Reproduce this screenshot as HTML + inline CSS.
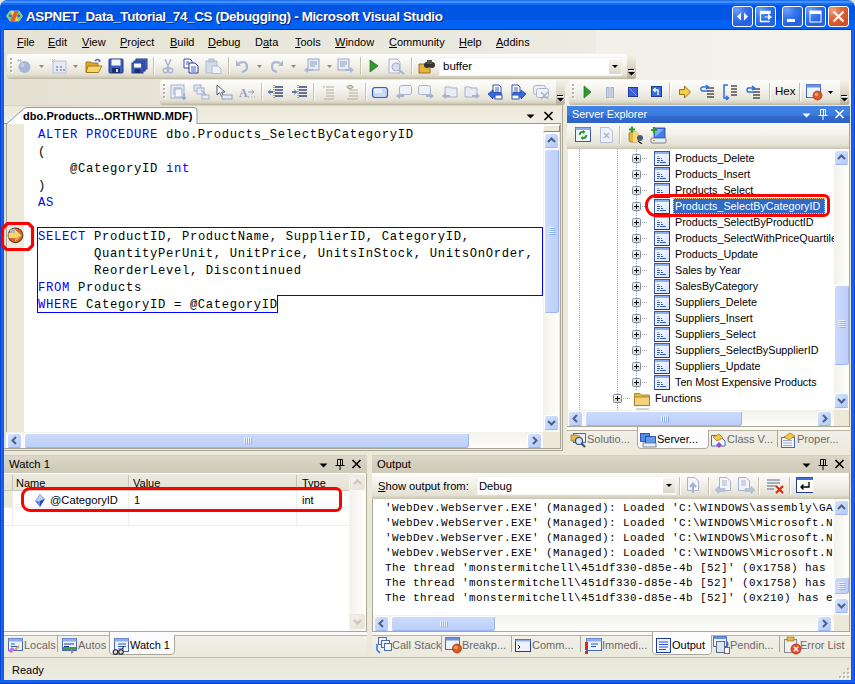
<!DOCTYPE html><html><head><meta charset="utf-8"><style>
*{margin:0;padding:0;box-sizing:border-box}
html,body{width:855px;height:684px;overflow:hidden;background:#ECE9D8}
body{position:relative;font-family:"Liberation Sans",sans-serif;font-size:11px;color:#000}
.a{position:absolute}
.t{position:absolute;white-space:nowrap;line-height:13px}
.k{color:#0000FF}
.u{text-decoration:underline;text-underline-offset:1px}
.mono{font-family:"Liberation Mono",monospace}
.tbar{border-radius:3px;background:linear-gradient(to bottom,#FDFDFB 0%,#F5F4EE 35%,#E6E3D6 80%,#D4D0BE 92%,#B9B49E 100%)}
.grip{position:absolute;width:3px;height:15px;background:repeating-linear-gradient(to bottom,#B5B19E 0 2px,transparent 2px 4px) 0 0/2px 15px no-repeat,repeating-linear-gradient(to bottom,#fff 0 2px,transparent 2px 4px) 1px 1px/2px 15px no-repeat}
.sep{position:absolute;width:2px;height:18px;border-left:1px solid #C5C1AE;border-right:1px solid #fff}
.capbar{position:absolute;height:18px;background:linear-gradient(to bottom,#CFCBBA 0,#DAD7C9 1px,#D4D0C0 50%,#CECAB9 100%)}
.vtrack{position:absolute;background:linear-gradient(to right,#F2F1EA,#FEFEFB)}
.htrack{position:absolute;background:linear-gradient(to bottom,#F2F1EA,#FEFEFB)}
.sb{position:absolute;width:15px;height:15px;border-radius:3px;border:1px solid #fff;border-bottom-color:#9DB6EE;background:linear-gradient(135deg,#D6E2FE 0%,#C4D5FC 50%,#B6CAF8 100%)}
.sbd{position:absolute;width:15px;height:15px;border-radius:2px;border:1px solid #E8E6DA;background:linear-gradient(135deg,#F4F3EE,#E4E1D4)}
.th{position:absolute;border-radius:3px;border:1px solid #fff;border-bottom-color:#9DB6EE;border-right-color:#9DB6EE;background:linear-gradient(to right,#CBDAFD,#BDCFF9)}
.thh{position:absolute;border-radius:3px;border:1px solid #fff;border-bottom-color:#9DB6EE;border-right-color:#9DB6EE;background:linear-gradient(to bottom,#CBDAFD,#BDCFF9)}
.tabtxt{color:#555}
</style></head><body>
<div class="a" style="left:0px;top:0px;width:855px;height:30px;border-radius:7px 7px 0 0;background:linear-gradient(to bottom,#0A4CD8 0px,#3C92FF 1px,#3C92FF 3px,#166CF4 3px,#166CF4 5px,#0055E3 5px,#0055E3 20px,#0061F4 20px,#0061F4 29px,#0033C6 29px)"></div>
<svg class="a" style="left:6px;top:10px" width="17" height="12" viewBox="0 0 17 12"><path d="M0.5 6 L4 1 H13 L16.5 6 L13 11 H4Z" fill="#86C858" stroke="#A8D8E8" stroke-width="0.8"/><path d="M4.5 1 H8.5 L12.5 11 H8.5Z" fill="#F6D060"/><path d="M4.5 11 H8.5 L12.5 1 H8.5Z" fill="#E8582A"/><circle cx="4.3" cy="5.8" r="1.4" fill="#1A66F0"/><circle cx="12.7" cy="5.8" r="1.4" fill="#1A66F0"/></svg>
<div class="t" style="left:26px;top:9px;font-size:13.4px;letter-spacing:-0.33px;font-weight:bold;color:#fff;text-shadow:1px 1px 0 #0A1E7A;line-height:15px">ASPNET_Data_Tutorial_74_CS (Debugging) - Microsoft Visual Studio</div>
<div class="a" style="left:732px;top:6px;width:21px;height:21px;border:1px solid #fff;border-radius:3px;background:radial-gradient(circle at 20% 15%,#6CA0F8 0%,#3A78EE 35%,#2460E4 70%,#2A66EA 100%)"></div>
<svg class="a" style="left:732px;top:6px" width="21" height="21" viewBox="0 0 21 21"><path d="M5 10.5 L9 6.5 L9 14.5Z M16 10.5 L12 6.5 L12 14.5Z" fill="#fff"/></svg>
<div class="a" style="left:755px;top:6px;width:21px;height:21px;border:1px solid #fff;border-radius:3px;background:radial-gradient(circle at 20% 15%,#6CA0F8 0%,#3A78EE 35%,#2460E4 70%,#2A66EA 100%)"></div>
<svg class="a" style="left:755px;top:6px" width="21" height="21" viewBox="0 0 21 21"><path d="M5.5 5 V15.5 H15 M5 5.5 H15 V8" stroke="#fff" stroke-width="1.3" fill="none"/><rect x="5" y="5" width="10" height="3" fill="#fff"/><path d="M9.5 11 H15 M13.5 9 L16 11 L13.5 13Z" stroke="#fff" stroke-width="1.2" fill="#fff"/></svg>
<div class="a" style="left:782px;top:6px;width:21px;height:21px;border:1px solid #fff;border-radius:3px;background:radial-gradient(circle at 20% 15%,#6CA0F8 0%,#3A78EE 35%,#2460E4 70%,#2A66EA 100%)"></div>
<svg class="a" style="left:782px;top:6px" width="21" height="21" viewBox="0 0 21 21"><rect x="5" y="13" width="8" height="3" fill="#fff"/></svg>
<div class="a" style="left:805px;top:6px;width:21px;height:21px;border:1px solid #fff;border-radius:3px;background:radial-gradient(circle at 20% 15%,#6CA0F8 0%,#3A78EE 35%,#2460E4 70%,#2A66EA 100%)"></div>
<svg class="a" style="left:805px;top:6px" width="21" height="21" viewBox="0 0 21 21"><rect x="5" y="5" width="11" height="11" fill="none" stroke="#fff" stroke-width="1"/><rect x="5" y="5" width="11" height="3" fill="#fff"/></svg>
<div class="a" style="left:828px;top:6px;width:21px;height:21px;border:1px solid #fff;border-radius:3px;background:radial-gradient(circle at 20% 15%,#F2A078 0%,#E2643A 40%,#D24E22 80%,#DA5A30 100%)"></div>
<svg class="a" style="left:828px;top:6px" width="21" height="21" viewBox="0 0 21 21"><path d="M5.5 5.5 L15.5 15.5 M15.5 5.5 L5.5 15.5" stroke="#fff" stroke-width="2.2"/></svg>
<div class="a" style="left:0px;top:29px;width:4px;height:655px;background:linear-gradient(to right,#0831C0,#166CF4 40%,#0855E6)"></div>
<div class="a" style="left:851px;top:29px;width:4px;height:655px;background:linear-gradient(to right,#0855E6,#166CF4 60%,#0831C0)"></div>
<div class="a" style="left:0px;top:680px;width:855px;height:4px;background:linear-gradient(to bottom,#0855E6,#166CF4 50%,#0831C0)"></div>
<div class="a" style="left:4px;top:30px;width:847px;height:75px;background:linear-gradient(to right,#E4E1D3 0%,#EAE7DC 45%,#F2F0E9 70%,#F3F1EA 100%)"></div>
<div class="a" style="left:4px;top:30px;width:592px;height:23px;background:linear-gradient(to right,#E6E3D5,#EDEBE2)"></div>
<div class="t" style="left:17px;top:36px;"><span class="u">F</span>ile</div>
<div class="t" style="left:48px;top:36px;"><span class="u">E</span>dit</div>
<div class="t" style="left:82px;top:36px;"><span class="u">V</span>iew</div>
<div class="t" style="left:120px;top:36px;"><span class="u">P</span>roject</div>
<div class="t" style="left:170px;top:36px;"><span class="u">B</span>uild</div>
<div class="t" style="left:208px;top:36px;"><span class="u">D</span>ebug</div>
<div class="t" style="left:255px;top:36px;">D<span class="u">a</span>ta</div>
<div class="t" style="left:295px;top:36px;"><span class="u">T</span>ools</div>
<div class="t" style="left:335px;top:36px;"><span class="u">W</span>indow</div>
<div class="t" style="left:389px;top:36px;"><span class="u">C</span>ommunity</div>
<div class="t" style="left:459px;top:36px;"><span class="u">H</span>elp</div>
<div class="t" style="left:496px;top:36px;"><span class="u">A</span>ddins</div>
<div class="a tbar" style="left:7px;top:54px;width:629px;height:25px"></div>
<div class="a tbar" style="left:160px;top:80px;width:405px;height:25px"></div>
<div class="a tbar" style="left:569px;top:80px;width:281px;height:25px"></div>
<div class="grip" style="left:10px;top:58px"></div>
<svg class="a" style="left:16px;top:58px" width="16" height="16" viewBox="0 0 16 16"><circle cx="8.5" cy="9" r="6" fill="#A9B6D6"/><circle cx="6.5" cy="7" r="2" fill="#C8D2EA"/><path d="M2 1 L5 4 M5 1 L2 4 M1 2.5 H6" stroke="#B9C4DE"/></svg>
<svg class="a" style="left:39px;top:65px" width="5" height="3" viewBox="0 0 5 3"><path d="M0 0 H5 L2.5 3Z" fill="#8E8B7C"/></svg>
<svg class="a" style="left:51px;top:58px" width="17" height="16" viewBox="0 0 17 16"><rect x="2" y="3" width="13" height="12" fill="#E5E9F3" stroke="#B7C1D9"/><rect x="5" y="8" width="2" height="2" fill="#97A5C6"/><rect x="9" y="8" width="2" height="2" fill="#97A5C6"/><rect x="5" y="11" width="2" height="2" fill="#97A5C6"/><rect x="9" y="11" width="2" height="2" fill="#97A5C6"/><rect x="12" y="11" width="2" height="2" fill="#97A5C6"/><path d="M1 1 L4 4 M4 1 L1 4" stroke="#B9C4DE"/></svg>
<svg class="a" style="left:73px;top:65px" width="5" height="3" viewBox="0 0 5 3"><path d="M0 0 H5 L2.5 3Z" fill="#8E8B7C"/></svg>
<svg class="a" style="left:85px;top:58px" width="18" height="16" viewBox="0 0 18 16"><path d="M1 4 H6 L7 5 H13 V14 H1Z" fill="#E0A828" stroke="#8A6510" stroke-width="0.8"/><path d="M3 8 H17 L13.5 14.5 H1Z" fill="#F7D66A" stroke="#8A6510" stroke-width="0.8"/><path d="M10 3 Q13 0 15 3" stroke="#3C6BD0" stroke-width="1.4" fill="none"/><path d="M14 1.5 L16 3.5 L13.5 4Z" fill="#3C6BD0"/></svg>
<svg class="a" style="left:108px;top:58px" width="16" height="16" viewBox="0 0 16 16"><rect x="1" y="1" width="14" height="14" rx="1" fill="#3F5FBF" stroke="#1F3A8A"/><rect x="3.5" y="1.5" width="9" height="6" fill="#F5F7FC"/><rect x="4" y="10" width="8" height="5" fill="#1C2C6C"/><rect x="8" y="11" width="2" height="3" fill="#DDE"/></svg>
<svg class="a" style="left:131px;top:58px" width="17" height="16" viewBox="0 0 17 16"><rect x="5" y="1" width="11" height="10" fill="#5A78D0" stroke="#1F3A8A"/><rect x="3" y="3" width="11" height="10" fill="#4A68C6" stroke="#1F3A8A"/><rect x="1" y="5" width="11" height="10" fill="#3F5FBF" stroke="#1F3A8A"/><rect x="3" y="5.5" width="7" height="4" fill="#F5F7FC"/><rect x="3.5" y="11" width="6" height="4" fill="#1C2C6C"/></svg>
<div class="sep" style="left:153px;top:57px"></div>
<svg class="a" style="left:160px;top:58px" width="16" height="16" viewBox="0 0 16 16"><path d="M5 1 L9 10 M11 1 L7 10" stroke="#A9B6D6" stroke-width="1.5"/><circle cx="5.5" cy="12.5" r="2.3" fill="none" stroke="#A9B6D6" stroke-width="1.5"/><circle cx="10.5" cy="12.5" r="2.3" fill="none" stroke="#A9B6D6" stroke-width="1.5"/></svg>
<svg class="a" style="left:183px;top:58px" width="16" height="16" viewBox="0 0 16 16"><path d="M1 1 H7 L9 3 V10 H1Z" fill="#fff" stroke="#3050B8"/><path d="M6 5 H12 L15 8 V15 H6Z" fill="#fff" stroke="#1F3A9A"/><path d="M8 9 H13 M8 11 H13 M8 13 H13 M3 4 H6 M3 6 H6" stroke="#3C5FC8"/></svg>
<svg class="a" style="left:205px;top:58px" width="17" height="16" viewBox="0 0 17 16"><rect x="1" y="3" width="11" height="12" fill="#D4DBEA" stroke="#AFBAD2"/><rect x="4" y="1" width="5" height="3" fill="#C7CFE0" stroke="#AFBAD2"/><path d="M7 8 H13 L16 11 V15.5 H7Z" fill="#EEF1F7" stroke="#AFBAD2"/></svg>
<div class="sep" style="left:228px;top:57px"></div>
<svg class="a" style="left:235px;top:58px" width="16" height="16" viewBox="0 0 16 16"><path d="M4 5 Q12 2 12 9 Q12 13 7 14" stroke="#A9B6D6" stroke-width="2.2" fill="none"/><path d="M1 2 L6 8 L1 8Z" fill="#A9B6D6"/></svg>
<svg class="a" style="left:257px;top:65px" width="5" height="3" viewBox="0 0 5 3"><path d="M0 0 H5 L2.5 3Z" fill="#8E8B7C"/></svg>
<svg class="a" style="left:268px;top:58px" width="16" height="16" viewBox="0 0 16 16"><path d="M12 5 Q4 2 4 9 Q4 13 9 14" stroke="#A9B6D6" stroke-width="2.2" fill="none"/><path d="M15 2 L10 8 L15 8Z" fill="#A9B6D6"/></svg>
<svg class="a" style="left:291px;top:65px" width="5" height="3" viewBox="0 0 5 3"><path d="M0 0 H5 L2.5 3Z" fill="#8E8B7C"/></svg>
<svg class="a" style="left:303px;top:58px" width="18" height="16" viewBox="0 0 18 16"><rect x="5" y="1" width="11" height="11" fill="#E6EBF6" stroke="#9DAACB"/><path d="M7 4 H14 M7 6 H14 M7 8 H12" stroke="#8C9DC8"/><path d="M1 12 L5 9 V11 H10 V13 H5 V15Z" fill="#A9B6D6"/></svg>
<svg class="a" style="left:327px;top:65px" width="5" height="3" viewBox="0 0 5 3"><path d="M0 0 H5 L2.5 3Z" fill="#8E8B7C"/></svg>
<svg class="a" style="left:337px;top:58px" width="18" height="16" viewBox="0 0 18 16"><rect x="1" y="1" width="11" height="11" fill="#E6EBF6" stroke="#9DAACB"/><path d="M3 4 H10 M3 6 H10 M3 8 H8" stroke="#8C9DC8"/><path d="M17 12 L13 9 V11 H8 V13 H13 V15Z" fill="#A9B6D6"/></svg>
<div class="sep" style="left:360px;top:57px"></div>
<svg class="a" style="left:368px;top:58px" width="12" height="16" viewBox="0 0 12 16"><path d="M2 2 L10 8 L2 14Z" fill="#2E9A2E" stroke="#1C6A1C" stroke-width="0.7"/></svg>
<svg class="a" style="left:388px;top:58px" width="18" height="17" viewBox="0 0 18 17"><path d="M1 1 H9 L12 4 V15 H1Z" fill="#F2F4F9" stroke="#A6B1CD"/><circle cx="8" cy="9" r="4" fill="#D9DEEB" stroke="#A6B1CD"/><path d="M11 12 L16 16" stroke="#A6B1CD" stroke-width="2"/></svg>
<div class="sep" style="left:411px;top:57px"></div>
<svg class="a" style="left:418px;top:58px" width="17" height="16" viewBox="0 0 17 16"><path d="M1 6 H6 L7 7 H12 V15 H1Z" fill="#E6B43A" stroke="#7A5A10" stroke-width="0.8"/><circle cx="9" cy="7" r="3" fill="#333"/><circle cx="14" cy="7" r="3" fill="#333"/><rect x="9" y="2" width="5" height="4" fill="#555"/></svg>
<div class="a" style="left:439px;top:57px;width:183px;height:19px;background:#fff;border:1px solid #F4F2EA"></div>
<div class="t" style="left:443px;top:60px;font-size:11.5px">buffer</div>
<div class="a" style="left:609px;top:59px;width:12px;height:15px;background:linear-gradient(to bottom,#F6F5F0,#DCD8C8)"></div>
<svg class="a" style="left:612px;top:65px" width="6" height="3" viewBox="0 0 6 3"><path d="M0 0 H6 L3 3Z" fill="#000"/></svg>
<div class="a" style="left:627px;top:54px;width:9px;height:25px;border-radius:0 3px 3px 0;background:linear-gradient(to bottom,#F4F2EA 0%,#DEDACB 45%,#C6C1AC 80%,#B3AE96 100%)"></div>
<svg class="a" style="left:628px;top:68px" width="8" height="9" viewBox="0 0 8 9"><rect x="1" y="2" width="6" height="1" fill="#fff"/><rect x="0" y="1" width="6" height="1" fill="#000"/><path d="M0 4 H7 L3.5 7.5Z" fill="#000"/><path d="M4 8 L7.5 4.5" stroke="#fff"/></svg>
<div class="grip" style="left:163px;top:84px"></div>
<svg class="a" style="left:170px;top:84px" width="17" height="16" viewBox="0 0 17 16"><rect x="1" y="1" width="13" height="13" fill="#E8ECF6" stroke="#A6B1CD"/><path d="M3 4 H12 M3 6 H8 M3 8 H8 M3 10 H8" stroke="#A6B1CD"/><rect x="5" y="5" width="7" height="8" fill="#F4F6FB" stroke="#A6B1CD"/><path d="M14 9 V15 M12 13 L14 15.5 L16 13" stroke="#8FA0C8" stroke-width="1.2" fill="none"/></svg>
<svg class="a" style="left:193px;top:84px" width="17" height="16" viewBox="0 0 17 16"><rect x="1" y="1" width="7" height="6" fill="#E1E6F2" stroke="#A6B1CD"/><rect x="4" y="4" width="7" height="6" fill="#E8ECF6" stroke="#A6B1CD"/><path d="M8 6 L14 12 L11 12 L13 15" stroke="#A6B1CD" fill="none" stroke-width="1.2"/><rect x="9" y="11" width="7" height="4" fill="#E8ECF6" stroke="#A6B1CD"/></svg>
<svg class="a" style="left:216px;top:84px" width="17" height="16" viewBox="0 0 17 16"><path d="M1 1 V11 L3.5 8.5 L6 13 L7.5 12 L5.5 8 H9Z" fill="#fff" stroke="#3A4A6A" stroke-width="0.9"/><rect x="6" y="11" width="10" height="4" fill="#E8ECF6" stroke="#8C9DC8"/></svg>
<svg class="a" style="left:239px;top:84px" width="16" height="16" viewBox="0 0 16 16"><text x="0" y="13" font-family="Liberation Serif" font-size="12" fill="#8C9DC8" font-weight="bold">A</text><path d="M9 8 H15 M12.5 6 L15 8 L12.5 10" stroke="#8C9DC8" fill="none"/><path d="M9 13 H10 M12 13 H13 M15 13 H16" stroke="#8C9DC8"/></svg>
<div class="sep" style="left:261px;top:83px"></div>
<svg class="a" style="left:267px;top:84px" width="17" height="16" viewBox="0 0 17 16"><path d="M7 1 V15" stroke="#4A5A88" stroke-dasharray="1 1"/><path d="M8 3 H16 M8 6 H16 M8 9 H16 M8 12 H16 M1 8 H6" stroke="#3A4A78" stroke-width="1.5"/><path d="M1 8 L4 5.5 M1 8 L4 10.5" stroke="#6C8AD8"/></svg>
<svg class="a" style="left:291px;top:84px" width="17" height="16" viewBox="0 0 17 16"><path d="M7 1 V15" stroke="#4A5A88" stroke-dasharray="1 1"/><path d="M8 3 H16 M8 6 H16 M8 9 H16 M8 12 H16 M1 8 H6" stroke="#3A4A78" stroke-width="1.5"/><path d="M6 8 L3 5.5 M6 8 L3 10.5" stroke="#6C8AD8"/></svg>
<div class="sep" style="left:313px;top:83px"></div>
<svg class="a" style="left:321px;top:84px" width="15" height="16" viewBox="0 0 15 16"><path d="M2 3 H4 M5 3 H13 M5 6 H13 M5 9 H13 M5 12 H13 M3 15 H13" stroke="#B2AE9C" stroke-width="1.2"/></svg>
<svg class="a" style="left:344px;top:84px" width="15" height="16" viewBox="0 0 15 16"><path d="M3 3 Q6 0 9 3 Q6 6 3 3" stroke="#A8A490" fill="none" stroke-width="1.2"/><path d="M5 6 H14 M5 9 H14 M5 12 H14 M3 15 H14" stroke="#B2AE9C" stroke-width="1.2"/></svg>
<div class="sep" style="left:365px;top:83px"></div>
<svg class="a" style="left:371px;top:84px" width="18" height="16" viewBox="0 0 18 16"><rect x="1.5" y="3.5" width="15" height="10" rx="2.5" fill="#C8D8FA" stroke="#3B5BC8" stroke-width="1.2"/><rect x="3" y="5" width="8" height="4" fill="#E8F0FE"/></svg>
<svg class="a" style="left:395px;top:84px" width="17" height="16" viewBox="0 0 17 16"><rect x="4.5" y="1.5" width="12" height="9" rx="2" fill="#EEF1F8" stroke="#A6B1CD"/><path d="M1 12 L5 9 V11 H9 V13 H5 V15Z" fill="#A6B1CD"/></svg>
<svg class="a" style="left:418px;top:84px" width="17" height="16" viewBox="0 0 17 16"><rect x="0.5" y="1.5" width="12" height="9" rx="2" fill="#EEF1F8" stroke="#A6B1CD"/><path d="M16 12 L12 9 V11 H8 V13 H12 V15Z" fill="#A6B1CD"/></svg>
<svg class="a" style="left:441px;top:84px" width="17" height="16" viewBox="0 0 17 16"><path d="M4 3 H9 L10 4 H16 V13 H4Z" fill="#E8EBF2" stroke="#A6B1CD"/><path d="M1 12 L5 9 V11 H9 V13 H5 V15Z" fill="#A6B1CD"/></svg>
<svg class="a" style="left:464px;top:84px" width="17" height="16" viewBox="0 0 17 16"><path d="M1 3 H6 L7 4 H13 V13 H1Z" fill="#E8EBF2" stroke="#A6B1CD"/><path d="M16 12 L12 9 V11 H8 V13 H12 V15Z" fill="#A6B1CD"/></svg>
<svg class="a" style="left:487px;top:84px" width="17" height="16" viewBox="0 0 17 16"><path d="M6 1 H12 L14 3 V11 H6Z" fill="#fff" stroke="#3050B8"/><path d="M8 4 H12 M8 6 H12 M8 8 H12" stroke="#3C5FC8"/><path d="M1 10 L6 6 V8.5 H14 V13 H6 V15Z" fill="#2F6FE0" stroke="#1F3A9A" stroke-width="0.7"/><rect x="8" y="11" width="7" height="4" fill="#fff" stroke="#3050B8"/></svg>
<svg class="a" style="left:510px;top:84px" width="17" height="16" viewBox="0 0 17 16"><path d="M2 1 H8 L10 3 V11 H2Z" fill="#fff" stroke="#3050B8"/><path d="M4 4 H8 M4 6 H8 M4 8 H8" stroke="#3C5FC8"/><path d="M16 10 L11 6 V8.5 H3 V13 H11 V15Z" fill="#2F6FE0" stroke="#1F3A9A" stroke-width="0.7"/><rect x="2" y="11" width="7" height="4" fill="#fff" stroke="#3050B8"/></svg>
<svg class="a" style="left:533px;top:84px" width="17" height="16" viewBox="0 0 17 16"><rect x="0.5" y="1.5" width="12" height="9" rx="2" fill="#EEF1F8" stroke="#A6B1CD"/><rect x="3.5" y="4.5" width="12" height="9" rx="2" fill="#EEF1F8" stroke="#A6B1CD"/><path d="M8 8 L15 15 M15 8 L8 15" stroke="#A6B1CD" stroke-width="1.5"/></svg>
<div class="a" style="left:556px;top:80px;width:9px;height:25px;border-radius:0 3px 3px 0;background:linear-gradient(to bottom,#F4F2EA 0%,#DEDACB 45%,#C6C1AC 80%,#B3AE96 100%)"></div>
<svg class="a" style="left:557px;top:94px" width="8" height="9" viewBox="0 0 8 9"><rect x="1" y="2" width="6" height="1" fill="#fff"/><rect x="0" y="1" width="6" height="1" fill="#000"/><path d="M0 4 H7 L3.5 7.5Z" fill="#000"/><path d="M4 8 L7.5 4.5" stroke="#fff"/></svg>
<div class="grip" style="left:572px;top:84px"></div>
<svg class="a" style="left:582px;top:84px" width="10" height="16" viewBox="0 0 10 16"><path d="M2 2 L9 8 L2 14Z" fill="#2E9A2E" stroke="#1C6A1C" stroke-width="0.7"/></svg>
<svg class="a" style="left:605px;top:84px" width="10" height="16" viewBox="0 0 10 16"><rect x="1.5" y="3.5" width="2.5" height="10" fill="#C9D3EC" stroke="#A6B1CD"/><rect x="6" y="3.5" width="2.5" height="10" fill="#C9D3EC" stroke="#A6B1CD"/></svg>
<svg class="a" style="left:627px;top:84px" width="12" height="16" viewBox="0 0 12 16"><rect x="1.5" y="3.5" width="9" height="9" fill="#3F64D8" stroke="#1F3A9A"/><path d="M2 4 L10 12" stroke="#7E9BEA"/></svg>
<svg class="a" style="left:650px;top:84px" width="13" height="16" viewBox="0 0 13 16"><rect x="1.5" y="2.5" width="10" height="10" fill="#2F6FE0" stroke="#1F3A9A"/><path d="M8 11 V6 H4 M5.5 4 L3.5 6 L5.5 8" stroke="#fff" stroke-width="1.3" fill="none"/></svg>
<div class="sep" style="left:669px;top:83px"></div>
<svg class="a" style="left:678px;top:84px" width="14" height="16" viewBox="0 0 14 16"><path d="M1.5 5.5 H6.5 V2 L12.5 8 L6.5 14 V10.5 H1.5Z" fill="#F6CE48" stroke="#8A6510" stroke-width="0.9"/></svg>
<svg class="a" style="left:699px;top:84px" width="17" height="16" viewBox="0 0 17 16"><path d="M8 4 H15 M8 7 H15 M8 10 H15 M8 13 H15" stroke="#000" stroke-width="1.2"/><path d="M10 7 H3 Q0.5 5 3 3 H9 M7 1 L9.5 3 L7 5" stroke="#2F6FE0" stroke-width="1.5" fill="none"/></svg>
<svg class="a" style="left:722px;top:84px" width="17" height="17" viewBox="0 0 17 17"><path d="M9 2 H15 M9 5 H15 M9 8 H15 M9 11 H15" stroke="#000" stroke-width="1.2"/><path d="M6 1 H2 V14 H6 M4 12 L6.5 14 L4 16" stroke="#2F6FE0" stroke-width="1.5" fill="none"/></svg>
<svg class="a" style="left:745px;top:84px" width="17" height="17" viewBox="0 0 17 17"><path d="M8 5 H15 M8 8 H15 M8 11 H15 M8 14 H15" stroke="#000" stroke-width="1.2"/><path d="M8 8 H3 Q1 6 3 4 H9 M7 2 L9.5 4 L7 6" stroke="#2F6FE0" stroke-width="1.5" fill="none"/></svg>
<div class="sep" style="left:769px;top:83px"></div>
<div class="t" style="left:775px;top:85px;font-size:11.5px">Hex</div>
<div class="sep" style="left:799px;top:83px"></div>
<svg class="a" style="left:806px;top:84px" width="18" height="17" viewBox="0 0 18 17"><rect x="0.5" y="0.5" width="14" height="13" fill="#F0F4FC" stroke="#4A6AB8"/><rect x="0.5" y="0.5" width="14" height="3" fill="#6A90E0"/><circle cx="11.5" cy="11.5" r="4.5" fill="#D85A28" stroke="#A03A10" stroke-width="0.8"/><circle cx="10.5" cy="10.5" r="1.8" fill="#F0A070"/></svg>
<svg class="a" style="left:828px;top:91px" width="5" height="3" viewBox="0 0 5 3"><path d="M0 0 H5 L2.5 3Z" fill="#000"/></svg>
<div class="a" style="left:840px;top:80px;width:9px;height:25px;border-radius:0 3px 3px 0;background:linear-gradient(to bottom,#F4F2EA 0%,#DEDACB 45%,#C6C1AC 80%,#B3AE96 100%)"></div>
<svg class="a" style="left:841px;top:94px" width="8" height="9" viewBox="0 0 8 9"><rect x="1" y="2" width="6" height="1" fill="#fff"/><rect x="0" y="1" width="6" height="1" fill="#000"/><path d="M0 4 H7 L3.5 7.5Z" fill="#000"/><path d="M4 8 L7.5 4.5" stroke="#fff"/></svg>
<div class="a" style="left:4px;top:105px;width:557px;height:345px;background:#ECE9D8"></div>
<div class="a" style="left:4px;top:105px;width:557px;height:1px;background:#D8D4C4"></div>
<div class="a" style="left:4px;top:106px;width:557px;height:18px;background:linear-gradient(to bottom,#ECE9D8,#F1EFE6)"></div>
<div class="a" style="left:4px;top:123px;width:557px;height:1px;background:#7F9DB9"></div>
<svg class="a" style="left:4px;top:106px" width="200" height="19" viewBox="0 0 200 19"><path d="M2 18.5 L20 2.5 Q21.5 1.5 23 1.5 L190 1.5 Q193 1.5 193 4.5 L193 18.5" fill="#fff" stroke="#7F9DB9" stroke-width="1"/></svg>
<div class="t" style="left:23px;top:110px;font-weight:bold;font-size:11px;letter-spacing:0.05px">dbo.Products...ORTHWND.MDF)</div>
<svg class="a" style="left:526px;top:114px" width="10" height="6" viewBox="0 0 10 6"><path d="M0.5 0.5 H8.5 L4.5 4.5Z" fill="#000"/></svg>
<svg class="a" style="left:543px;top:111px" width="11" height="10" viewBox="0 0 11 10"><path d="M1.5 1 L9.5 9 M9.5 1 L1.5 9" stroke="#000" stroke-width="1.6"/></svg>
<div class="a" style="left:4px;top:124px;width:2px;height:326px;background:#E4E1D4"></div>
<div class="a" style="left:6px;top:124px;width:1px;height:308px;background:#ACA899"></div>
<div class="a" style="left:7px;top:124px;width:17px;height:308px;background:#ECE9D8"></div>
<div class="a" style="left:24px;top:124px;width:519px;height:308px;background:#fff"></div>
<svg class="a" style="left:7px;top:227px" width="17" height="17" viewBox="0 0 17 17"><circle cx="8.5" cy="8.3" r="7.3" fill="#D8643A" stroke="#6A3A20" stroke-width="1.1"/><path d="M3 3 Q5 1.5 8 1.5 V6 H3Z" fill="#B8B8B0"/><path d="M1.5 6 H8 V2.5 L14.5 8.5 L8 14.5 V11 H1.5Z" fill="#F6D868"/><path d="M8 11 V14.5 L14.5 8.5Z" fill="#E8A840"/></svg>
<svg class="a" style="left:0px;top:221px" width="36" height="31" viewBox="0 0 36 31"><path d="M7.5 2.5 H28.5 L32.5 6.5 V24.5 L28.5 28.5 H6.5 L2.5 24.5 V7.5Z" fill="none" stroke="#F00" stroke-width="3.2" stroke-linejoin="round"/></svg>
<div class="a mono" style="left:38px;top:127px;font-size:12.2px;letter-spacing:0.68px;line-height:17px;white-space:pre;color:#000"><div><span class="k">ALTER PROCEDURE</span> dbo.Products_SelectByCategoryID</div><div>(</div><div>    @CategoryID <span class="k">int</span></div><div>)</div><div><span class="k">AS</span></div><div> </div><div><span class="k">SELECT</span> ProductID, ProductName, SupplierID, CategoryID,</div><div>       QuantityPerUnit, UnitPrice, UnitsInStock, UnitsOnOrder,</div><div>       ReorderLevel, Discontinued</div><div><span class="k">FROM</span> Products</div><div><span class="k">WHERE</span> CategoryID = @CategoryID</div></div>
<div class="a" style="left:37px;top:227px;width:506px;height:1px;background:#00F"></div>
<div class="a" style="left:37px;top:227px;width:1px;height:86px;background:#00F"></div>
<div class="a" style="left:542px;top:227px;width:1px;height:69px;background:#00F"></div>
<div class="a" style="left:277px;top:295px;width:266px;height:1px;background:#00F"></div>
<div class="a" style="left:277px;top:295px;width:1px;height:18px;background:#00F"></div>
<div class="a" style="left:37px;top:312px;width:241px;height:1px;background:#00F"></div>
<div class="vtrack" style="left:543px;top:124px;width:16px;height:308px"></div>
<div class="a" style="left:543px;top:125px;width:17px;height:7px;border:1px solid;border-color:#fff #8F8B78 #8F8B78 #fff;background:#ECE9D8"></div>
<div class="sb" style="left:544px;top:133px"></div>
<svg class="a" style="left:544px;top:133px" width="15" height="15" viewBox="0 0 15 15"><path d="M4 9 L7.5 5.5 L11 9" stroke="#4D6185" stroke-width="2" fill="none"/></svg>
<div class="th" style="left:544px;top:149px;width:15px;height:164px"></div>
<svg class="a" style="left:544px;top:149px" width="15" height="164" viewBox="0 0 15 164"><path d="M4.5 78.5 H10.5 M4.5 80.5 H10.5 M4.5 82.5 H10.5 M4.5 84.5 H10.5" stroke="#EEF3FE" stroke-width="1"/><path d="M5.5 79.5 H11.5 M5.5 81.5 H11.5 M5.5 83.5 H11.5 M5.5 85.5 H11.5" stroke="#8CB0F8" stroke-width="1"/></svg>
<div class="sb" style="left:544px;top:415px"></div>
<svg class="a" style="left:544px;top:415px" width="15" height="15" viewBox="0 0 15 15"><path d="M4 6 L7.5 9.5 L11 6" stroke="#4D6185" stroke-width="2" fill="none"/></svg>
<div class="htrack" style="left:6px;top:432px;width:537px;height:16px"></div>
<div class="sb" style="left:7px;top:433px"></div>
<svg class="a" style="left:7px;top:433px" width="15" height="15" viewBox="0 0 15 15"><path d="M9 4 L5.5 7.5 L9 11" stroke="#4D6185" stroke-width="2" fill="none"/></svg>
<div class="thh" style="left:24px;top:433px;width:445px;height:15px"></div>
<svg class="a" style="left:240px;top:433px" width="15" height="15" viewBox="0 0 15 15"><path d="M4.5 4.5 V10.5 M6.5 4.5 V10.5 M8.5 4.5 V10.5 M10.5 4.5 V10.5" stroke="#EEF3FE"/><path d="M5.5 5.5 V11.5 M7.5 5.5 V11.5 M9.5 5.5 V11.5 M11.5 5.5 V11.5" stroke="#8CB0F8"/></svg>
<div class="sb" style="left:527px;top:433px"></div>
<svg class="a" style="left:527px;top:433px" width="15" height="15" viewBox="0 0 15 15"><path d="M6 4 L9.5 7.5 L6 11" stroke="#4D6185" stroke-width="2" fill="none"/></svg>
<div class="a" style="left:543px;top:432px;width:17px;height:16px;background:#ECE9D8"></div>
<div class="a" style="left:560px;top:124px;width:1px;height:325px;background:#ACA899"></div>
<div class="a" style="left:4px;top:448px;width:557px;height:1px;background:#ACA899"></div>
<div class="a" style="left:562px;top:105px;width:1px;height:346px;background:#ACA899"></div>
<div class="a" style="left:4px;top:450px;width:559px;height:1px;background:#ACA899"></div>
<div class="a" style="left:563px;top:105px;width:4px;height:346px;background:#ECE9D8"></div>
<div class="a" style="left:567px;top:106px;width:283px;height:345px;background:#ECE9D8"></div>
<div class="a" style="left:567px;top:106px;width:283px;height:17px;background:linear-gradient(to bottom,#4384E6 0%,#3A7BE0 55%,#3269CC 62%,#2E63C6 100%)"></div>
<div class="t" style="left:572px;top:108px;color:#fff;font-size:10.8px">Server Explorer</div>
<svg class="a" style="left:802px;top:113px" width="10" height="6" viewBox="0 0 10 6"><path d="M0.5 0.5 H8.5 L4.5 4.5Z" fill="#fff"/></svg>
<svg class="a" style="left:818px;top:109px" width="10" height="11" viewBox="0 0 10 11"><path d="M2.5 0.5 H7.5 V6.5 H2.5Z M5.5 1 V6 M0.5 6.5 H9.5 M5 7 V11" stroke="#fff" stroke-width="1" fill="none"/></svg>
<svg class="a" style="left:834px;top:109px" width="11" height="10" viewBox="0 0 11 10"><path d="M1.5 1 L9.5 9 M9.5 1 L1.5 9" stroke="#fff" stroke-width="1.6"/></svg>
<div class="a" style="left:567px;top:123px;width:283px;height:26px;background:linear-gradient(to bottom,#FCFCFA 0%,#F3F1EA 40%,#E4E1D3 85%,#C9C4B0 100%)"></div>
<svg class="a" style="left:575px;top:127px" width="17" height="16" viewBox="0 0 17 16"><rect x="0.5" y="0.5" width="15" height="14" fill="#F4F7FD" stroke="#3A5AA8"/><rect x="0.5" y="0.5" width="15" height="2.5" fill="#8EAEEA"/><path d="M4.5 8 Q5 4.5 9 4.8 M11.5 8 Q11 11.5 7 11.2" stroke="#2E9A2E" stroke-width="1.8" fill="none"/><path d="M8 3 L10.5 5 L8 7Z M8 9 L5.5 11 L8 13Z" fill="#2E9A2E"/></svg>
<svg class="a" style="left:599px;top:127px" width="15" height="16" viewBox="0 0 15 16"><path d="M1.5 0.5 H10 L13.5 4 V15.5 H1.5Z" fill="#EFF1F7" stroke="#B6BFD6"/><path d="M5 6 L10 11 M10 6 L5 11" stroke="#A9B6D6" stroke-width="1.6"/></svg>
<div class="sep" style="left:619px;top:126px"></div>
<svg class="a" style="left:626px;top:126px" width="19" height="18" viewBox="0 0 19 18"><rect x="3" y="6" width="9" height="10" rx="2" fill="#E8B440" stroke="#8A6510" stroke-width="0.7"/><rect x="7" y="6" width="5" height="10" fill="#F6D878"/><path d="M3 3.5 H9 M6 0.5 V6.5" stroke="#2E9A2E" stroke-width="2.2"/><circle cx="14" cy="12" r="3" fill="#4A5A7A"/><path d="M12 15 L16 18" stroke="#223" stroke-width="1.2"/></svg>
<svg class="a" style="left:649px;top:126px" width="18" height="18" viewBox="0 0 18 18"><path d="M5 2 H16 V12 H5Z" fill="#3F7FE8" stroke="#1F3A9A" stroke-width="0.8"/><path d="M6 3 L15 3 L6 11Z" fill="#7FB0F8"/><rect x="2" y="12" width="15" height="5" rx="1" fill="#E8ECF4" stroke="#5A6A8A" stroke-width="0.8"/><rect x="4" y="14" width="2" height="1" fill="#D89020"/><path d="M2 4 H8 M5 1 V7" stroke="#2E9A2E" stroke-width="2.2"/></svg>
<div class="a" style="left:568px;top:149px;width:266px;height:262px;background:#fff"></div>
<div class="a" style="left:579px;top:149px;width:1px;height:262px;background:repeating-linear-gradient(to bottom,#A0A0A0 0 1px,transparent 1px 2px)"></div>
<div class="a" style="left:617px;top:149px;width:1px;height:262px;background:repeating-linear-gradient(to bottom,#A0A0A0 0 1px,transparent 1px 2px)"></div>
<div class="a" style="left:636px;top:149px;width:1px;height:241px;background:repeating-linear-gradient(to bottom,#A0A0A0 0 1px,transparent 1px 2px)"></div>
<svg class="a" style="left:632px;top:154px" width="9" height="9" viewBox="0 0 9 9"><rect x="0.5" y="0.5" width="8" height="8" rx="1" fill="#F4F3EC" stroke="#7A8DA8"/><rect x="1" y="5" width="7" height="3" fill="#E0DDD0"/><path d="M2 4.5 H7 M4.5 2 V7" stroke="#000" stroke-width="1"/></svg>
<div class="a" style="left:642px;top:158px;width:6px;height:1px;background:repeating-linear-gradient(to right,#A0A0A0 0 1px,transparent 1px 2px)"></div>
<svg class="a" style="left:654px;top:151px" width="16" height="15" viewBox="0 0 16 15"><defs><linearGradient id="spg" x1="0" y1="0" x2="1" y2="1"><stop offset="0" stop-color="#fff"/><stop offset="1" stop-color="#D8E4FA"/></linearGradient></defs><rect x="0.5" y="0.5" width="15" height="14" fill="url(#spg)" stroke="#3A5AB0"/><path d="M15.5 0.5 V14.5 H0.5" stroke="#223A80" fill="none"/><rect x="1" y="1" width="14" height="2" fill="#8EB0EE"/><rect x="3" y="5" width="2" height="1" fill="#7FA0E0"/><rect x="3" y="7" width="3" height="1" fill="#2F58C8"/><rect x="7" y="7" width="1" height="1" fill="#2F58C8"/><rect x="3" y="9" width="3" height="1" fill="#2F58C8"/><rect x="7" y="9" width="2" height="1" fill="#2F58C8"/><rect x="3" y="11" width="2" height="1" fill="#2F58C8"/><rect x="6" y="11" width="6" height="1" fill="#2F58C8"/></svg>
<div class="t" style="left:675px;top:152px;font-size:10.75px">Products_Delete</div>
<svg class="a" style="left:632px;top:170px" width="9" height="9" viewBox="0 0 9 9"><rect x="0.5" y="0.5" width="8" height="8" rx="1" fill="#F4F3EC" stroke="#7A8DA8"/><rect x="1" y="5" width="7" height="3" fill="#E0DDD0"/><path d="M2 4.5 H7 M4.5 2 V7" stroke="#000" stroke-width="1"/></svg>
<div class="a" style="left:642px;top:174px;width:6px;height:1px;background:repeating-linear-gradient(to right,#A0A0A0 0 1px,transparent 1px 2px)"></div>
<svg class="a" style="left:654px;top:167px" width="16" height="15" viewBox="0 0 16 15"><defs><linearGradient id="spg" x1="0" y1="0" x2="1" y2="1"><stop offset="0" stop-color="#fff"/><stop offset="1" stop-color="#D8E4FA"/></linearGradient></defs><rect x="0.5" y="0.5" width="15" height="14" fill="url(#spg)" stroke="#3A5AB0"/><path d="M15.5 0.5 V14.5 H0.5" stroke="#223A80" fill="none"/><rect x="1" y="1" width="14" height="2" fill="#8EB0EE"/><rect x="3" y="5" width="2" height="1" fill="#7FA0E0"/><rect x="3" y="7" width="3" height="1" fill="#2F58C8"/><rect x="7" y="7" width="1" height="1" fill="#2F58C8"/><rect x="3" y="9" width="3" height="1" fill="#2F58C8"/><rect x="7" y="9" width="2" height="1" fill="#2F58C8"/><rect x="3" y="11" width="2" height="1" fill="#2F58C8"/><rect x="6" y="11" width="6" height="1" fill="#2F58C8"/></svg>
<div class="t" style="left:675px;top:168px;font-size:10.75px">Products_Insert</div>
<svg class="a" style="left:632px;top:186px" width="9" height="9" viewBox="0 0 9 9"><rect x="0.5" y="0.5" width="8" height="8" rx="1" fill="#F4F3EC" stroke="#7A8DA8"/><rect x="1" y="5" width="7" height="3" fill="#E0DDD0"/><path d="M2 4.5 H7 M4.5 2 V7" stroke="#000" stroke-width="1"/></svg>
<div class="a" style="left:642px;top:190px;width:6px;height:1px;background:repeating-linear-gradient(to right,#A0A0A0 0 1px,transparent 1px 2px)"></div>
<svg class="a" style="left:654px;top:183px" width="16" height="15" viewBox="0 0 16 15"><defs><linearGradient id="spg" x1="0" y1="0" x2="1" y2="1"><stop offset="0" stop-color="#fff"/><stop offset="1" stop-color="#D8E4FA"/></linearGradient></defs><rect x="0.5" y="0.5" width="15" height="14" fill="url(#spg)" stroke="#3A5AB0"/><path d="M15.5 0.5 V14.5 H0.5" stroke="#223A80" fill="none"/><rect x="1" y="1" width="14" height="2" fill="#8EB0EE"/><rect x="3" y="5" width="2" height="1" fill="#7FA0E0"/><rect x="3" y="7" width="3" height="1" fill="#2F58C8"/><rect x="7" y="7" width="1" height="1" fill="#2F58C8"/><rect x="3" y="9" width="3" height="1" fill="#2F58C8"/><rect x="7" y="9" width="2" height="1" fill="#2F58C8"/><rect x="3" y="11" width="2" height="1" fill="#2F58C8"/><rect x="6" y="11" width="6" height="1" fill="#2F58C8"/></svg>
<div class="t" style="left:675px;top:184px;font-size:10.75px">Products_Select</div>
<svg class="a" style="left:632px;top:202px" width="9" height="9" viewBox="0 0 9 9"><rect x="0.5" y="0.5" width="8" height="8" rx="1" fill="#F4F3EC" stroke="#7A8DA8"/><rect x="1" y="5" width="7" height="3" fill="#E0DDD0"/><path d="M2 4.5 H7 M4.5 2 V7" stroke="#000" stroke-width="1"/></svg>
<div class="a" style="left:642px;top:206px;width:6px;height:1px;background:repeating-linear-gradient(to right,#A0A0A0 0 1px,transparent 1px 2px)"></div>
<svg class="a" style="left:654px;top:199px" width="16" height="15" viewBox="0 0 16 15"><defs><linearGradient id="spg" x1="0" y1="0" x2="1" y2="1"><stop offset="0" stop-color="#fff"/><stop offset="1" stop-color="#D8E4FA"/></linearGradient></defs><rect x="0.5" y="0.5" width="15" height="14" fill="url(#spg)" stroke="#3A5AB0"/><path d="M15.5 0.5 V14.5 H0.5" stroke="#223A80" fill="none"/><rect x="1" y="1" width="14" height="2" fill="#8EB0EE"/><rect x="3" y="5" width="2" height="1" fill="#7FA0E0"/><rect x="3" y="7" width="3" height="1" fill="#2F58C8"/><rect x="7" y="7" width="1" height="1" fill="#2F58C8"/><rect x="3" y="9" width="3" height="1" fill="#2F58C8"/><rect x="7" y="9" width="2" height="1" fill="#2F58C8"/><rect x="3" y="11" width="2" height="1" fill="#2F58C8"/><rect x="6" y="11" width="6" height="1" fill="#2F58C8"/></svg>
<div class="a" style="left:673px;top:198px;width:152px;height:16px;background:#316AC5;outline:1px dotted #E8C878;outline-offset:-1px"></div>
<div class="t" style="left:675px;top:200px;color:#fff;font-size:10.75px">Products_SelectByCategoryID</div>
<svg class="a" style="left:632px;top:218px" width="9" height="9" viewBox="0 0 9 9"><rect x="0.5" y="0.5" width="8" height="8" rx="1" fill="#F4F3EC" stroke="#7A8DA8"/><rect x="1" y="5" width="7" height="3" fill="#E0DDD0"/><path d="M2 4.5 H7 M4.5 2 V7" stroke="#000" stroke-width="1"/></svg>
<div class="a" style="left:642px;top:222px;width:6px;height:1px;background:repeating-linear-gradient(to right,#A0A0A0 0 1px,transparent 1px 2px)"></div>
<svg class="a" style="left:654px;top:215px" width="16" height="15" viewBox="0 0 16 15"><defs><linearGradient id="spg" x1="0" y1="0" x2="1" y2="1"><stop offset="0" stop-color="#fff"/><stop offset="1" stop-color="#D8E4FA"/></linearGradient></defs><rect x="0.5" y="0.5" width="15" height="14" fill="url(#spg)" stroke="#3A5AB0"/><path d="M15.5 0.5 V14.5 H0.5" stroke="#223A80" fill="none"/><rect x="1" y="1" width="14" height="2" fill="#8EB0EE"/><rect x="3" y="5" width="2" height="1" fill="#7FA0E0"/><rect x="3" y="7" width="3" height="1" fill="#2F58C8"/><rect x="7" y="7" width="1" height="1" fill="#2F58C8"/><rect x="3" y="9" width="3" height="1" fill="#2F58C8"/><rect x="7" y="9" width="2" height="1" fill="#2F58C8"/><rect x="3" y="11" width="2" height="1" fill="#2F58C8"/><rect x="6" y="11" width="6" height="1" fill="#2F58C8"/></svg>
<div class="t" style="left:675px;top:216px;font-size:10.75px">Products_SelectByProductID</div>
<svg class="a" style="left:632px;top:234px" width="9" height="9" viewBox="0 0 9 9"><rect x="0.5" y="0.5" width="8" height="8" rx="1" fill="#F4F3EC" stroke="#7A8DA8"/><rect x="1" y="5" width="7" height="3" fill="#E0DDD0"/><path d="M2 4.5 H7 M4.5 2 V7" stroke="#000" stroke-width="1"/></svg>
<div class="a" style="left:642px;top:238px;width:6px;height:1px;background:repeating-linear-gradient(to right,#A0A0A0 0 1px,transparent 1px 2px)"></div>
<svg class="a" style="left:654px;top:231px" width="16" height="15" viewBox="0 0 16 15"><defs><linearGradient id="spg" x1="0" y1="0" x2="1" y2="1"><stop offset="0" stop-color="#fff"/><stop offset="1" stop-color="#D8E4FA"/></linearGradient></defs><rect x="0.5" y="0.5" width="15" height="14" fill="url(#spg)" stroke="#3A5AB0"/><path d="M15.5 0.5 V14.5 H0.5" stroke="#223A80" fill="none"/><rect x="1" y="1" width="14" height="2" fill="#8EB0EE"/><rect x="3" y="5" width="2" height="1" fill="#7FA0E0"/><rect x="3" y="7" width="3" height="1" fill="#2F58C8"/><rect x="7" y="7" width="1" height="1" fill="#2F58C8"/><rect x="3" y="9" width="3" height="1" fill="#2F58C8"/><rect x="7" y="9" width="2" height="1" fill="#2F58C8"/><rect x="3" y="11" width="2" height="1" fill="#2F58C8"/><rect x="6" y="11" width="6" height="1" fill="#2F58C8"/></svg>
<div class="t" style="left:675px;top:232px;font-size:10.75px">Products_SelectWithPriceQuartile</div>
<svg class="a" style="left:632px;top:250px" width="9" height="9" viewBox="0 0 9 9"><rect x="0.5" y="0.5" width="8" height="8" rx="1" fill="#F4F3EC" stroke="#7A8DA8"/><rect x="1" y="5" width="7" height="3" fill="#E0DDD0"/><path d="M2 4.5 H7 M4.5 2 V7" stroke="#000" stroke-width="1"/></svg>
<div class="a" style="left:642px;top:254px;width:6px;height:1px;background:repeating-linear-gradient(to right,#A0A0A0 0 1px,transparent 1px 2px)"></div>
<svg class="a" style="left:654px;top:247px" width="16" height="15" viewBox="0 0 16 15"><defs><linearGradient id="spg" x1="0" y1="0" x2="1" y2="1"><stop offset="0" stop-color="#fff"/><stop offset="1" stop-color="#D8E4FA"/></linearGradient></defs><rect x="0.5" y="0.5" width="15" height="14" fill="url(#spg)" stroke="#3A5AB0"/><path d="M15.5 0.5 V14.5 H0.5" stroke="#223A80" fill="none"/><rect x="1" y="1" width="14" height="2" fill="#8EB0EE"/><rect x="3" y="5" width="2" height="1" fill="#7FA0E0"/><rect x="3" y="7" width="3" height="1" fill="#2F58C8"/><rect x="7" y="7" width="1" height="1" fill="#2F58C8"/><rect x="3" y="9" width="3" height="1" fill="#2F58C8"/><rect x="7" y="9" width="2" height="1" fill="#2F58C8"/><rect x="3" y="11" width="2" height="1" fill="#2F58C8"/><rect x="6" y="11" width="6" height="1" fill="#2F58C8"/></svg>
<div class="t" style="left:675px;top:248px;font-size:10.75px">Products_Update</div>
<svg class="a" style="left:632px;top:266px" width="9" height="9" viewBox="0 0 9 9"><rect x="0.5" y="0.5" width="8" height="8" rx="1" fill="#F4F3EC" stroke="#7A8DA8"/><rect x="1" y="5" width="7" height="3" fill="#E0DDD0"/><path d="M2 4.5 H7 M4.5 2 V7" stroke="#000" stroke-width="1"/></svg>
<div class="a" style="left:642px;top:270px;width:6px;height:1px;background:repeating-linear-gradient(to right,#A0A0A0 0 1px,transparent 1px 2px)"></div>
<svg class="a" style="left:654px;top:263px" width="16" height="15" viewBox="0 0 16 15"><defs><linearGradient id="spg" x1="0" y1="0" x2="1" y2="1"><stop offset="0" stop-color="#fff"/><stop offset="1" stop-color="#D8E4FA"/></linearGradient></defs><rect x="0.5" y="0.5" width="15" height="14" fill="url(#spg)" stroke="#3A5AB0"/><path d="M15.5 0.5 V14.5 H0.5" stroke="#223A80" fill="none"/><rect x="1" y="1" width="14" height="2" fill="#8EB0EE"/><rect x="3" y="5" width="2" height="1" fill="#7FA0E0"/><rect x="3" y="7" width="3" height="1" fill="#2F58C8"/><rect x="7" y="7" width="1" height="1" fill="#2F58C8"/><rect x="3" y="9" width="3" height="1" fill="#2F58C8"/><rect x="7" y="9" width="2" height="1" fill="#2F58C8"/><rect x="3" y="11" width="2" height="1" fill="#2F58C8"/><rect x="6" y="11" width="6" height="1" fill="#2F58C8"/></svg>
<div class="t" style="left:675px;top:264px;font-size:10.75px">Sales by Year</div>
<svg class="a" style="left:632px;top:282px" width="9" height="9" viewBox="0 0 9 9"><rect x="0.5" y="0.5" width="8" height="8" rx="1" fill="#F4F3EC" stroke="#7A8DA8"/><rect x="1" y="5" width="7" height="3" fill="#E0DDD0"/><path d="M2 4.5 H7 M4.5 2 V7" stroke="#000" stroke-width="1"/></svg>
<div class="a" style="left:642px;top:286px;width:6px;height:1px;background:repeating-linear-gradient(to right,#A0A0A0 0 1px,transparent 1px 2px)"></div>
<svg class="a" style="left:654px;top:279px" width="16" height="15" viewBox="0 0 16 15"><defs><linearGradient id="spg" x1="0" y1="0" x2="1" y2="1"><stop offset="0" stop-color="#fff"/><stop offset="1" stop-color="#D8E4FA"/></linearGradient></defs><rect x="0.5" y="0.5" width="15" height="14" fill="url(#spg)" stroke="#3A5AB0"/><path d="M15.5 0.5 V14.5 H0.5" stroke="#223A80" fill="none"/><rect x="1" y="1" width="14" height="2" fill="#8EB0EE"/><rect x="3" y="5" width="2" height="1" fill="#7FA0E0"/><rect x="3" y="7" width="3" height="1" fill="#2F58C8"/><rect x="7" y="7" width="1" height="1" fill="#2F58C8"/><rect x="3" y="9" width="3" height="1" fill="#2F58C8"/><rect x="7" y="9" width="2" height="1" fill="#2F58C8"/><rect x="3" y="11" width="2" height="1" fill="#2F58C8"/><rect x="6" y="11" width="6" height="1" fill="#2F58C8"/></svg>
<div class="t" style="left:675px;top:280px;font-size:10.75px">SalesByCategory</div>
<svg class="a" style="left:632px;top:298px" width="9" height="9" viewBox="0 0 9 9"><rect x="0.5" y="0.5" width="8" height="8" rx="1" fill="#F4F3EC" stroke="#7A8DA8"/><rect x="1" y="5" width="7" height="3" fill="#E0DDD0"/><path d="M2 4.5 H7 M4.5 2 V7" stroke="#000" stroke-width="1"/></svg>
<div class="a" style="left:642px;top:302px;width:6px;height:1px;background:repeating-linear-gradient(to right,#A0A0A0 0 1px,transparent 1px 2px)"></div>
<svg class="a" style="left:654px;top:295px" width="16" height="15" viewBox="0 0 16 15"><defs><linearGradient id="spg" x1="0" y1="0" x2="1" y2="1"><stop offset="0" stop-color="#fff"/><stop offset="1" stop-color="#D8E4FA"/></linearGradient></defs><rect x="0.5" y="0.5" width="15" height="14" fill="url(#spg)" stroke="#3A5AB0"/><path d="M15.5 0.5 V14.5 H0.5" stroke="#223A80" fill="none"/><rect x="1" y="1" width="14" height="2" fill="#8EB0EE"/><rect x="3" y="5" width="2" height="1" fill="#7FA0E0"/><rect x="3" y="7" width="3" height="1" fill="#2F58C8"/><rect x="7" y="7" width="1" height="1" fill="#2F58C8"/><rect x="3" y="9" width="3" height="1" fill="#2F58C8"/><rect x="7" y="9" width="2" height="1" fill="#2F58C8"/><rect x="3" y="11" width="2" height="1" fill="#2F58C8"/><rect x="6" y="11" width="6" height="1" fill="#2F58C8"/></svg>
<div class="t" style="left:675px;top:296px;font-size:10.75px">Suppliers_Delete</div>
<svg class="a" style="left:632px;top:314px" width="9" height="9" viewBox="0 0 9 9"><rect x="0.5" y="0.5" width="8" height="8" rx="1" fill="#F4F3EC" stroke="#7A8DA8"/><rect x="1" y="5" width="7" height="3" fill="#E0DDD0"/><path d="M2 4.5 H7 M4.5 2 V7" stroke="#000" stroke-width="1"/></svg>
<div class="a" style="left:642px;top:318px;width:6px;height:1px;background:repeating-linear-gradient(to right,#A0A0A0 0 1px,transparent 1px 2px)"></div>
<svg class="a" style="left:654px;top:311px" width="16" height="15" viewBox="0 0 16 15"><defs><linearGradient id="spg" x1="0" y1="0" x2="1" y2="1"><stop offset="0" stop-color="#fff"/><stop offset="1" stop-color="#D8E4FA"/></linearGradient></defs><rect x="0.5" y="0.5" width="15" height="14" fill="url(#spg)" stroke="#3A5AB0"/><path d="M15.5 0.5 V14.5 H0.5" stroke="#223A80" fill="none"/><rect x="1" y="1" width="14" height="2" fill="#8EB0EE"/><rect x="3" y="5" width="2" height="1" fill="#7FA0E0"/><rect x="3" y="7" width="3" height="1" fill="#2F58C8"/><rect x="7" y="7" width="1" height="1" fill="#2F58C8"/><rect x="3" y="9" width="3" height="1" fill="#2F58C8"/><rect x="7" y="9" width="2" height="1" fill="#2F58C8"/><rect x="3" y="11" width="2" height="1" fill="#2F58C8"/><rect x="6" y="11" width="6" height="1" fill="#2F58C8"/></svg>
<div class="t" style="left:675px;top:312px;font-size:10.75px">Suppliers_Insert</div>
<svg class="a" style="left:632px;top:330px" width="9" height="9" viewBox="0 0 9 9"><rect x="0.5" y="0.5" width="8" height="8" rx="1" fill="#F4F3EC" stroke="#7A8DA8"/><rect x="1" y="5" width="7" height="3" fill="#E0DDD0"/><path d="M2 4.5 H7 M4.5 2 V7" stroke="#000" stroke-width="1"/></svg>
<div class="a" style="left:642px;top:334px;width:6px;height:1px;background:repeating-linear-gradient(to right,#A0A0A0 0 1px,transparent 1px 2px)"></div>
<svg class="a" style="left:654px;top:327px" width="16" height="15" viewBox="0 0 16 15"><defs><linearGradient id="spg" x1="0" y1="0" x2="1" y2="1"><stop offset="0" stop-color="#fff"/><stop offset="1" stop-color="#D8E4FA"/></linearGradient></defs><rect x="0.5" y="0.5" width="15" height="14" fill="url(#spg)" stroke="#3A5AB0"/><path d="M15.5 0.5 V14.5 H0.5" stroke="#223A80" fill="none"/><rect x="1" y="1" width="14" height="2" fill="#8EB0EE"/><rect x="3" y="5" width="2" height="1" fill="#7FA0E0"/><rect x="3" y="7" width="3" height="1" fill="#2F58C8"/><rect x="7" y="7" width="1" height="1" fill="#2F58C8"/><rect x="3" y="9" width="3" height="1" fill="#2F58C8"/><rect x="7" y="9" width="2" height="1" fill="#2F58C8"/><rect x="3" y="11" width="2" height="1" fill="#2F58C8"/><rect x="6" y="11" width="6" height="1" fill="#2F58C8"/></svg>
<div class="t" style="left:675px;top:328px;font-size:10.75px">Suppliers_Select</div>
<svg class="a" style="left:632px;top:346px" width="9" height="9" viewBox="0 0 9 9"><rect x="0.5" y="0.5" width="8" height="8" rx="1" fill="#F4F3EC" stroke="#7A8DA8"/><rect x="1" y="5" width="7" height="3" fill="#E0DDD0"/><path d="M2 4.5 H7 M4.5 2 V7" stroke="#000" stroke-width="1"/></svg>
<div class="a" style="left:642px;top:350px;width:6px;height:1px;background:repeating-linear-gradient(to right,#A0A0A0 0 1px,transparent 1px 2px)"></div>
<svg class="a" style="left:654px;top:343px" width="16" height="15" viewBox="0 0 16 15"><defs><linearGradient id="spg" x1="0" y1="0" x2="1" y2="1"><stop offset="0" stop-color="#fff"/><stop offset="1" stop-color="#D8E4FA"/></linearGradient></defs><rect x="0.5" y="0.5" width="15" height="14" fill="url(#spg)" stroke="#3A5AB0"/><path d="M15.5 0.5 V14.5 H0.5" stroke="#223A80" fill="none"/><rect x="1" y="1" width="14" height="2" fill="#8EB0EE"/><rect x="3" y="5" width="2" height="1" fill="#7FA0E0"/><rect x="3" y="7" width="3" height="1" fill="#2F58C8"/><rect x="7" y="7" width="1" height="1" fill="#2F58C8"/><rect x="3" y="9" width="3" height="1" fill="#2F58C8"/><rect x="7" y="9" width="2" height="1" fill="#2F58C8"/><rect x="3" y="11" width="2" height="1" fill="#2F58C8"/><rect x="6" y="11" width="6" height="1" fill="#2F58C8"/></svg>
<div class="t" style="left:675px;top:344px;font-size:10.75px">Suppliers_SelectBySupplierID</div>
<svg class="a" style="left:632px;top:362px" width="9" height="9" viewBox="0 0 9 9"><rect x="0.5" y="0.5" width="8" height="8" rx="1" fill="#F4F3EC" stroke="#7A8DA8"/><rect x="1" y="5" width="7" height="3" fill="#E0DDD0"/><path d="M2 4.5 H7 M4.5 2 V7" stroke="#000" stroke-width="1"/></svg>
<div class="a" style="left:642px;top:366px;width:6px;height:1px;background:repeating-linear-gradient(to right,#A0A0A0 0 1px,transparent 1px 2px)"></div>
<svg class="a" style="left:654px;top:359px" width="16" height="15" viewBox="0 0 16 15"><defs><linearGradient id="spg" x1="0" y1="0" x2="1" y2="1"><stop offset="0" stop-color="#fff"/><stop offset="1" stop-color="#D8E4FA"/></linearGradient></defs><rect x="0.5" y="0.5" width="15" height="14" fill="url(#spg)" stroke="#3A5AB0"/><path d="M15.5 0.5 V14.5 H0.5" stroke="#223A80" fill="none"/><rect x="1" y="1" width="14" height="2" fill="#8EB0EE"/><rect x="3" y="5" width="2" height="1" fill="#7FA0E0"/><rect x="3" y="7" width="3" height="1" fill="#2F58C8"/><rect x="7" y="7" width="1" height="1" fill="#2F58C8"/><rect x="3" y="9" width="3" height="1" fill="#2F58C8"/><rect x="7" y="9" width="2" height="1" fill="#2F58C8"/><rect x="3" y="11" width="2" height="1" fill="#2F58C8"/><rect x="6" y="11" width="6" height="1" fill="#2F58C8"/></svg>
<div class="t" style="left:675px;top:360px;font-size:10.75px">Suppliers_Update</div>
<svg class="a" style="left:632px;top:378px" width="9" height="9" viewBox="0 0 9 9"><rect x="0.5" y="0.5" width="8" height="8" rx="1" fill="#F4F3EC" stroke="#7A8DA8"/><rect x="1" y="5" width="7" height="3" fill="#E0DDD0"/><path d="M2 4.5 H7 M4.5 2 V7" stroke="#000" stroke-width="1"/></svg>
<div class="a" style="left:642px;top:382px;width:6px;height:1px;background:repeating-linear-gradient(to right,#A0A0A0 0 1px,transparent 1px 2px)"></div>
<svg class="a" style="left:654px;top:375px" width="16" height="15" viewBox="0 0 16 15"><defs><linearGradient id="spg" x1="0" y1="0" x2="1" y2="1"><stop offset="0" stop-color="#fff"/><stop offset="1" stop-color="#D8E4FA"/></linearGradient></defs><rect x="0.5" y="0.5" width="15" height="14" fill="url(#spg)" stroke="#3A5AB0"/><path d="M15.5 0.5 V14.5 H0.5" stroke="#223A80" fill="none"/><rect x="1" y="1" width="14" height="2" fill="#8EB0EE"/><rect x="3" y="5" width="2" height="1" fill="#7FA0E0"/><rect x="3" y="7" width="3" height="1" fill="#2F58C8"/><rect x="7" y="7" width="1" height="1" fill="#2F58C8"/><rect x="3" y="9" width="3" height="1" fill="#2F58C8"/><rect x="7" y="9" width="2" height="1" fill="#2F58C8"/><rect x="3" y="11" width="2" height="1" fill="#2F58C8"/><rect x="6" y="11" width="6" height="1" fill="#2F58C8"/></svg>
<div class="t" style="left:675px;top:376px;font-size:10.75px">Ten Most Expensive Products</div>
<svg class="a" style="left:613px;top:394px" width="9" height="9" viewBox="0 0 9 9"><rect x="0.5" y="0.5" width="8" height="8" rx="1" fill="#F4F3EC" stroke="#7A8DA8"/><rect x="1" y="5" width="7" height="3" fill="#E0DDD0"/><path d="M2 4.5 H7 M4.5 2 V7" stroke="#000" stroke-width="1"/></svg>
<div class="a" style="left:623px;top:398px;width:8px;height:1px;background:repeating-linear-gradient(to right,#A0A0A0 0 1px,transparent 1px 2px)"></div>
<svg class="a" style="left:634px;top:391px" width="17" height="15" viewBox="0 0 17 15"><path d="M0.5 2.5 H6 L7.5 4 H15.5 V14.5 H0.5Z" fill="#E6B84A" stroke="#9A7418" stroke-width="0.8"/><path d="M0.5 6 H15.5 V14.5 H0.5Z" fill="#F3D27A" stroke="#9A7418" stroke-width="0.8"/></svg>
<div class="t" style="left:655px;top:392px;font-size:10.75px">Functions</div>
<div class="a" style="left:636px;top:408px;width:13px;height:3px;background:#D8D6CC"></div>
<div class="a" style="left:645px;top:194px;width:185px;height:23px;border:3px solid #F00;border-radius:11px 6px 6px 11px"></div>
<div class="vtrack" style="left:834px;top:149px;width:15px;height:262px"></div>
<div class="sb" style="left:834px;top:150px"></div>
<svg class="a" style="left:834px;top:150px" width="15" height="15" viewBox="0 0 15 15"><path d="M4 9 L7.5 5.5 L11 9" stroke="#4D6185" stroke-width="2" fill="none"/></svg>
<div class="th" style="left:834px;top:285px;width:15px;height:80px"></div>
<svg class="a" style="left:834px;top:285px" width="15" height="80" viewBox="0 0 15 80"><path d="M4.5 35.5 H10.5 M4.5 37.5 H10.5 M4.5 39.5 H10.5 M4.5 41.5 H10.5" stroke="#EEF3FE"/><path d="M5.5 36.5 H11.5 M5.5 38.5 H11.5 M5.5 40.5 H11.5 M5.5 42.5 H11.5" stroke="#8CB0F8"/></svg>
<div class="sb" style="left:834px;top:393px"></div>
<svg class="a" style="left:834px;top:393px" width="15" height="15" viewBox="0 0 15 15"><path d="M4 6 L7.5 9.5 L11 6" stroke="#4D6185" stroke-width="2" fill="none"/></svg>
<div class="htrack" style="left:568px;top:410px;width:266px;height:16px"></div>
<div class="sb" style="left:568px;top:411px"></div>
<svg class="a" style="left:568px;top:411px" width="15" height="15" viewBox="0 0 15 15"><path d="M9 4 L5.5 7.5 L9 11" stroke="#4D6185" stroke-width="2" fill="none"/></svg>
<div class="thh" style="left:585px;top:411px;width:157px;height:15px"></div>
<svg class="a" style="left:657px;top:411px" width="15" height="15" viewBox="0 0 15 15"><path d="M4.5 4.5 V10.5 M6.5 4.5 V10.5 M8.5 4.5 V10.5 M10.5 4.5 V10.5" stroke="#EEF3FE"/><path d="M5.5 5.5 V11.5 M7.5 5.5 V11.5 M9.5 5.5 V11.5 M11.5 5.5 V11.5" stroke="#8CB0F8"/></svg>
<div class="sb" style="left:817px;top:411px"></div>
<svg class="a" style="left:817px;top:411px" width="15" height="15" viewBox="0 0 15 15"><path d="M6 4 L9.5 7.5 L6 11" stroke="#4D6185" stroke-width="2" fill="none"/></svg>
<div class="a" style="left:834px;top:410px;width:15px;height:16px;background:#ECE9D8"></div>
<div class="a" style="left:849px;top:123px;width:1px;height:304px;background:#ACA899"></div>
<div class="a" style="left:567px;top:426px;width:283px;height:1px;background:#ACA899"></div>
<div class="a" style="left:567px;top:427px;width:283px;height:24px;background:linear-gradient(to bottom,#FBFAF6 0,#FBFAF6 3px,#F1EFE7 4px,#ECE9DC 100%)"></div>
<div class="a" style="left:567px;top:430px;width:283px;height:1px;background:#B8B4A2"></div>
<svg class="a" style="left:637px;top:427px" width="72" height="23" viewBox="0 0 72 23"><path d="M0.5 0 V18 Q0.5 21.5 4 21.5 H68 Q71.5 21.5 71.5 18 V4" fill="#FCFCFE" stroke="#ACA899"/><rect x="1" y="0" width="70" height="5" fill="#FCFCFE"/></svg>
<svg class="a" style="left:570px;top:432px" width="17" height="16" viewBox="0 0 17 16"><rect x="3.5" y="1.5" width="12" height="9" fill="#E8EEFA" stroke="#4A6AB8"/><path d="M1 3 H7 L8 4 H10 V9 H1Z" fill="#E6B84A" stroke="#8A6510" stroke-width="0.6"/><circle cx="9" cy="9" r="3.5" fill="#D8E8F8" stroke="#3A4A6A" stroke-width="1.2"/><path d="M11.5 11.5 L15 15" stroke="#3A4A6A" stroke-width="2"/></svg>
<div class="t" style="left:587px;top:433px;font-size:11px;color:#6A6A6A">Solutio...</div>
<svg class="a" style="left:640px;top:432px" width="17" height="16" viewBox="0 0 17 16"><rect x="0.5" y="1.5" width="9" height="8" fill="#4F8AE8" stroke="#1F3A9A" stroke-width="0.8"/><rect x="5.5" y="4.5" width="10" height="8" fill="#5F9AF0" stroke="#1F3A9A" stroke-width="0.8"/><rect x="3" y="11" width="13" height="4" fill="#E8ECF4" stroke="#5A6A8A" stroke-width="0.8"/></svg>
<div class="t" style="left:657px;top:433px;font-size:11px;color:#000">Server...</div>
<svg class="a" style="left:710px;top:432px" width="17" height="17" viewBox="0 0 17 17"><path d="M1.5 3.5 H9 L15 9 V14 H1.5Z" fill="#F0F4FC" stroke="#4A6AB8"/><path d="M3 5 L9 2 L13 6 L7 9Z" fill="#F2C848" stroke="#8A6510" stroke-width="0.6"/><path d="M9 10 L12 13 L9 16 L6 13Z" fill="#9A4AD0"/></svg>
<div class="t" style="left:727px;top:433px;font-size:11px;color:#6A6A6A">Class V...</div>
<div class="a" style="left:777px;top:431px;width:1px;height:16px;background:#ACA899"></div>
<svg class="a" style="left:780px;top:432px" width="17" height="16" viewBox="0 0 17 16"><rect x="1.5" y="5.5" width="13" height="10" fill="#F0F4FC" stroke="#4A6AB8"/><path d="M3 8.5 H12 M3 11 H12 M3 13.5 H12" stroke="#9AAAD0"/><path d="M4 5 L10 1 L15 4 L9 8Z" fill="#F2C848" stroke="#8A6510" stroke-width="0.6"/></svg>
<div class="t" style="left:797px;top:433px;font-size:11px;color:#6A6A6A">Proper...</div>
<div class="capbar" style="left:4px;top:455px;width:363px"></div>
<div class="t" style="left:9px;top:458px;font-size:11.3px">Watch 1</div>
<svg class="a" style="left:319px;top:463px" width="10" height="6" viewBox="0 0 10 6"><path d="M0.5 0.5 H8.5 L4.5 4.5Z" fill="#000"/></svg>
<svg class="a" style="left:335px;top:459px" width="10" height="11" viewBox="0 0 10 11"><path d="M2.5 0.5 H7.5 V6.5 H2.5Z M5.5 1 V6 M0.5 6.5 H9.5 M5 7 V11" stroke="#000" stroke-width="1" fill="none"/></svg>
<svg class="a" style="left:351px;top:459px" width="11" height="10" viewBox="0 0 11 10"><path d="M1.5 1 L9.5 9 M9.5 1 L1.5 9" stroke="#000" stroke-width="1.6"/></svg>
<div class="a" style="left:4px;top:473px;width:363px;height:158px;background:#fff"></div>
<div class="a" style="left:4px;top:474px;width:345px;height:17px;background:linear-gradient(to bottom,#EBEAE0,#E5E2D4)"></div>
<div class="a" style="left:4px;top:490px;width:345px;height:1px;background:#C8C5B8"></div>
<div class="a" style="left:12px;top:475px;width:1px;height:16px;background:#C8C5B8"></div>
<div class="a" style="left:128px;top:475px;width:1px;height:16px;background:#C8C5B8"></div>
<div class="a" style="left:296px;top:475px;width:1px;height:16px;background:#C8C5B8"></div>
<div class="t" style="left:16px;top:477px;">Name</div>
<div class="t" style="left:133px;top:477px;">Value</div>
<div class="t" style="left:302px;top:477px;">Type</div>
<div class="a" style="left:4px;top:491px;width:8px;height:17px;background:#ECE9D8"></div>
<div class="a" style="left:4px;top:507px;width:345px;height:1px;background:#EEEDE6"></div>
<div class="a" style="left:12px;top:491px;width:1px;height:35px;background:#EEEDE6"></div>
<div class="a" style="left:128px;top:491px;width:1px;height:35px;background:#EEEDE6"></div>
<div class="a" style="left:296px;top:491px;width:1px;height:35px;background:#EEEDE6"></div>
<div class="a" style="left:4px;top:525px;width:345px;height:1px;background:#EEEDE6"></div>
<svg class="a" style="left:35px;top:494px" width="10" height="13" viewBox="0 0 10 13"><path d="M5 0.5 L9.5 5 L5 12.5 L0.5 7Z" fill="#6A8FE8" stroke="#2A4AB8" stroke-width="0.6"/><path d="M5 0.5 L9.5 5 L5 7 L0.5 7Z" fill="#B8CCF8"/><path d="M5 7 L9.5 5 L5 12.5Z" fill="#2A4AB8"/></svg>
<div class="t" style="left:50px;top:494px;font-size:11.2px">@CategoryID</div>
<div class="t" style="left:134px;top:494px;">1</div>
<div class="t" style="left:302px;top:494px;">int</div>
<div class="a" style="left:21px;top:487px;width:321px;height:25px;border:3px solid #F00;border-radius:9px 6px 6px 9px"></div>
<div class="vtrack" style="left:349px;top:473px;width:17px;height:158px"></div>
<div class="sbd" style="left:350px;top:475px"></div>
<svg class="a" style="left:350px;top:475px" width="15" height="15" viewBox="0 0 15 15"><path d="M4 9 L7.5 5.5 L11 9" stroke="#C9C6B8" stroke-width="2" fill="none"/></svg>
<div class="sbd" style="left:350px;top:614px"></div>
<svg class="a" style="left:350px;top:614px" width="15" height="15" viewBox="0 0 15 15"><path d="M4 6 L7.5 9.5 L11 6" stroke="#C9C6B8" stroke-width="2" fill="none"/></svg>
<div class="a" style="left:366px;top:473px;width:1px;height:158px;background:#ACA899"></div>
<div class="a" style="left:4px;top:631px;width:363px;height:1px;background:#ACA899"></div>
<div class="a" style="left:4px;top:632px;width:363px;height:25px;background:linear-gradient(to bottom,#FBFAF6 0,#FBFAF6 3px,#F1EFE7 4px,#ECE9DC 100%)"></div>
<div class="a" style="left:4px;top:635px;width:363px;height:1px;background:#B8B4A2"></div>
<svg class="a" style="left:109px;top:632px" width="66" height="24" viewBox="0 0 66 24"><path d="M0.5 0 V19 Q0.5 22.5 4 22.5 H62 Q65.5 22.5 65.5 19 V4" fill="#FCFCFE" stroke="#ACA899"/><rect x="1" y="0" width="64" height="5" fill="#FCFCFE"/></svg>
<svg class="a" style="left:7px;top:637px" width="17" height="17" viewBox="0 0 17 17"><rect x="1.5" y="1.5" width="14" height="12" fill="#EEF2FC" stroke="#4A6AB8"/><rect x="1.5" y="1.5" width="14" height="3" fill="#8EAEEA"/><path d="M4 7 H8 M4 9.5 H10 M4 12 H7" stroke="#2F58C8"/><path d="M1 14 L5 10 L8 13 L4 16Z" fill="#C070E0"/><path d="M8 13 L12 9" stroke="#E0A030" stroke-width="2"/></svg>
<div class="t" style="left:24px;top:639px;color:#6A6A6A;font-size:11px">Locals</div>
<div class="a" style="left:57px;top:635px;width:1px;height:17px;background:#ACA899"></div>
<svg class="a" style="left:61px;top:637px" width="17" height="17" viewBox="0 0 17 17"><rect x="1.5" y="1.5" width="14" height="12" fill="#EEF2FC" stroke="#4A6AB8"/><rect x="1.5" y="1.5" width="14" height="3" fill="#8EAEEA"/><path d="M3 7 H13 M3 9.5 H8" stroke="#1A3A9A"/><rect x="2" y="10" width="13" height="3" fill="#3AA040"/><path d="M10 12 L13 15 L10 17Z" fill="#C070E0"/></svg>
<div class="t" style="left:78px;top:639px;color:#6A6A6A;font-size:11px">Autos</div>
<svg class="a" style="left:112px;top:638px" width="17" height="17" viewBox="0 0 17 17"><rect x="2.5" y="0.5" width="14" height="13" fill="#EEF2FC" stroke="#4A6AB8"/><rect x="2.5" y="0.5" width="14" height="3" fill="#8EAEEA"/><path d="M6 6 H14 M6 8.5 H14 M6 11 H12" stroke="#2F58C8"/><circle cx="3.5" cy="14" r="2.3" fill="#DDE" stroke="#222" stroke-width="1.1"/><circle cx="9" cy="14" r="2.3" fill="#DDE" stroke="#222" stroke-width="1.1"/><path d="M10 11 L12 8" stroke="#222"/></svg>
<div class="t" style="left:130px;top:639px;font-size:11px">Watch 1</div>
<div class="capbar" style="left:372px;top:455px;width:478px"></div>
<div class="t" style="left:377px;top:458px;font-size:11.3px">Output</div>
<svg class="a" style="left:802px;top:463px" width="10" height="6" viewBox="0 0 10 6"><path d="M0.5 0.5 H8.5 L4.5 4.5Z" fill="#000"/></svg>
<svg class="a" style="left:818px;top:459px" width="10" height="11" viewBox="0 0 10 11"><path d="M2.5 0.5 H7.5 V6.5 H2.5Z M5.5 1 V6 M0.5 6.5 H9.5 M5 7 V11" stroke="#000" stroke-width="1" fill="none"/></svg>
<svg class="a" style="left:834px;top:459px" width="11" height="10" viewBox="0 0 11 10"><path d="M1.5 1 L9.5 9 M9.5 1 L1.5 9" stroke="#000" stroke-width="1.6"/></svg>
<div class="a" style="left:372px;top:473px;width:478px;height:26px;background:linear-gradient(to bottom,#FCFCFA 0%,#F3F1EA 40%,#E4E1D3 85%,#C9C4B0 100%)"></div>
<div class="t" style="left:378px;top:480px;font-size:11.2px"><span class="u">S</span>how output from:</div>
<div class="a" style="left:477px;top:476px;width:199px;height:19px;background:#fff;border:1px solid #F4F2EA"></div>
<div class="t" style="left:479px;top:480px;font-size:11.2px">Debug</div>
<div class="a" style="left:663px;top:478px;width:12px;height:15px;background:linear-gradient(to bottom,#F6F5F0,#DCD8C8)"></div>
<svg class="a" style="left:666px;top:484px" width="6" height="3" viewBox="0 0 6 3"><path d="M0 0 H6 L3 3Z" fill="#000"/></svg>
<div class="sep" style="left:679px;top:477px"></div>
<svg class="a" style="left:685px;top:477px" width="16" height="17" viewBox="0 0 16 17"><path d="M2.5 0.5 H10 L13.5 4 V13.5 H2.5Z" fill="#F2F4F9" stroke="#A6B1CD"/><path d="M8 16 V7 M5 10 L8 6.5 L11 10" stroke="#A6B1CD" stroke-width="2" fill="none"/></svg>
<div class="sep" style="left:708px;top:477px"></div>
<svg class="a" style="left:714px;top:477px" width="19" height="17" viewBox="0 0 19 17"><path d="M5.5 0.5 H13 L16.5 4 V13.5 H5.5Z" fill="#F2F4F9" stroke="#A6B1CD"/><path d="M8 4 H13 M8 6 H13 M8 8 H13" stroke="#A6B1CD"/><path d="M1 13 L5 9.5 V11.5 H11 V14.5 H5 V16.5Z" fill="#B8C2DA" stroke="#A6B1CD" stroke-width="0.6"/></svg>
<svg class="a" style="left:737px;top:477px" width="19" height="17" viewBox="0 0 19 17"><path d="M1.5 0.5 H9 L12.5 4 V13.5 H1.5Z" fill="#F2F4F9" stroke="#A6B1CD"/><path d="M4 4 H9 M4 6 H9 M4 8 H9" stroke="#A6B1CD"/><path d="M18 13 L14 9.5 V11.5 H8 V14.5 H14 V16.5Z" fill="#B8C2DA" stroke="#A6B1CD" stroke-width="0.6"/></svg>
<div class="sep" style="left:758px;top:477px"></div>
<svg class="a" style="left:766px;top:477px" width="19" height="17" viewBox="0 0 19 17"><path d="M1 3 H14 M1 6 H14 M1 9 H10 M1 12 H8" stroke="#5A6A8A" stroke-width="1.2"/><path d="M10 9 L17 16 M17 9 L10 16" stroke="#E02A10" stroke-width="2.2"/></svg>
<div class="sep" style="left:789px;top:477px"></div>
<svg class="a" style="left:796px;top:477px" width="17" height="17" viewBox="0 0 17 17"><rect x="0.5" y="0.5" width="17" height="15" fill="#fff" stroke="#1F3A9A"/><rect x="0.5" y="0.5" width="17" height="2.5" fill="#3F6FD8"/><path d="M13 5 V10 H5 M7.5 7.5 L5 10 L7.5 12.5" stroke="#000" stroke-width="1.3" fill="none"/></svg>
<div class="a" style="left:372px;top:499px;width:1px;height:132px;background:#ACA899"></div>
<div class="a" style="left:373px;top:499px;width:461px;height:116px;background:#fff"></div>
<div class="a mono" style="left:385px;top:501px;width:448px;height:115px;overflow:hidden;font-size:11px;letter-spacing:0.4px;line-height:15px;white-space:pre"><div>&#x27;WebDev.WebServer.EXE&#x27; (Managed): Loaded &#x27;C:\WINDOWS\assembly\GAC_MSIL</div><div>&#x27;WebDev.WebServer.EXE&#x27; (Managed): Loaded &#x27;C:\WINDOWS\Microsoft.NET</div><div>&#x27;WebDev.WebServer.EXE&#x27; (Managed): Loaded &#x27;C:\WINDOWS\Microsoft.NET</div><div>&#x27;WebDev.WebServer.EXE&#x27; (Managed): Loaded &#x27;C:\WINDOWS\Microsoft.NET</div><div>The thread &#x27;monstermitchell\451df330-d85e-4b [52]&#x27; (0x1758) has exited</div><div>The thread &#x27;monstermitchell\451df330-d85e-4b [52]&#x27; (0x1758) has exited</div><div>The thread &#x27;monstermitchell\451df330-d85e-4b [52]&#x27; (0x210) has exited</div></div>
<div class="vtrack" style="left:834px;top:499px;width:15px;height:116px"></div>
<div class="sb" style="left:834px;top:500px"></div>
<svg class="a" style="left:834px;top:500px" width="15" height="15" viewBox="0 0 15 15"><path d="M4 9 L7.5 5.5 L11 9" stroke="#4D6185" stroke-width="2" fill="none"/></svg>
<div class="th" style="left:834px;top:577px;width:15px;height:17px"></div>
<svg class="a" style="left:834px;top:577px" width="15" height="17" viewBox="0 0 15 17"><path d="M4.5 5.5 H10.5 M4.5 7.5 H10.5 M4.5 9.5 H10.5 M4.5 11.5 H10.5" stroke="#EEF3FE"/><path d="M5.5 6.5 H11.5 M5.5 8.5 H11.5 M5.5 10.5 H11.5 M5.5 12.5 H11.5" stroke="#8CB0F8"/></svg>
<div class="sb" style="left:834px;top:598px"></div>
<svg class="a" style="left:834px;top:598px" width="15" height="15" viewBox="0 0 15 15"><path d="M4 6 L7.5 9.5 L11 6" stroke="#4D6185" stroke-width="2" fill="none"/></svg>
<div class="htrack" style="left:373px;top:615px;width:461px;height:16px"></div>
<div class="sb" style="left:374px;top:616px"></div>
<svg class="a" style="left:374px;top:616px" width="15" height="15" viewBox="0 0 15 15"><path d="M9 4 L5.5 7.5 L9 11" stroke="#4D6185" stroke-width="2" fill="none"/></svg>
<div class="thh" style="left:391px;top:616px;width:104px;height:15px"></div>
<svg class="a" style="left:436px;top:616px" width="15" height="15" viewBox="0 0 15 15"><path d="M4.5 4.5 V10.5 M6.5 4.5 V10.5 M8.5 4.5 V10.5 M10.5 4.5 V10.5" stroke="#EEF3FE"/><path d="M5.5 5.5 V11.5 M7.5 5.5 V11.5 M9.5 5.5 V11.5 M11.5 5.5 V11.5" stroke="#8CB0F8"/></svg>
<div class="sb" style="left:817px;top:616px"></div>
<svg class="a" style="left:817px;top:616px" width="15" height="15" viewBox="0 0 15 15"><path d="M6 4 L9.5 7.5 L6 11" stroke="#4D6185" stroke-width="2" fill="none"/></svg>
<div class="a" style="left:834px;top:615px;width:15px;height:16px;background:#ECE9D8"></div>
<div class="a" style="left:849px;top:473px;width:1px;height:158px;background:#ACA899"></div>
<div class="a" style="left:372px;top:631px;width:478px;height:1px;background:#ACA899"></div>
<div class="a" style="left:372px;top:632px;width:478px;height:25px;background:linear-gradient(to bottom,#FBFAF6 0,#FBFAF6 3px,#F1EFE7 4px,#ECE9DC 100%)"></div>
<div class="a" style="left:372px;top:635px;width:478px;height:1px;background:#B8B4A2"></div>
<svg class="a" style="left:652px;top:632px" width="60" height="24" viewBox="0 0 60 24"><path d="M0.5 0 V19 Q0.5 22.5 4 22.5 H56 Q59.5 22.5 59.5 19 V4" fill="#FCFCFE" stroke="#ACA899"/><rect x="1" y="0" width="58" height="5" fill="#FCFCFE"/></svg>
<svg class="a" style="left:375px;top:636px" width="17" height="18" viewBox="0 0 17 18"><rect x="3.5" y="1.5" width="8" height="7" fill="#EEF2FC" stroke="#4A6AB8"/><rect x="6.5" y="4.5" width="8" height="7" fill="#EEF2FC" stroke="#4A6AB8"/><rect x="9.5" y="7.5" width="7" height="7" fill="#EEF2FC" stroke="#4A6AB8"/><path d="M2 8 V14 L5 17" stroke="#2F6FE0" stroke-width="1.5" fill="none"/></svg>
<div class="t" style="left:392px;top:639px;font-size:11px;color:#6A6A6A">Call Stack</div>
<div class="a" style="left:441px;top:635px;width:1px;height:17px;background:#ACA899"></div>
<svg class="a" style="left:445px;top:636px" width="18" height="18" viewBox="0 0 18 18"><rect x="0.5" y="1.5" width="14" height="12" fill="#F0F4FC" stroke="#4A6AB8"/><rect x="0.5" y="1.5" width="14" height="3" fill="#6A90E0"/><circle cx="12" cy="12.5" r="4.5" fill="#D85A28" stroke="#A03A10" stroke-width="0.8"/><circle cx="11" cy="11.5" r="1.8" fill="#F0A070"/></svg>
<div class="t" style="left:462px;top:639px;font-size:11px;color:#6A6A6A">Breakp...</div>
<div class="a" style="left:511px;top:635px;width:1px;height:17px;background:#ACA899"></div>
<svg class="a" style="left:515px;top:637px" width="17" height="17" viewBox="0 0 17 17"><rect x="0.5" y="2.5" width="15" height="12" fill="#EEF2FC" stroke="#1F3A9A"/><rect x="0.5" y="2.5" width="15" height="2" fill="#8EAEEA"/><path d="M3 8 L5 10 L3 12" stroke="#000" fill="none"/></svg>
<div class="t" style="left:532px;top:639px;font-size:11px;color:#6A6A6A">Comm...</div>
<div class="a" style="left:580px;top:635px;width:1px;height:17px;background:#ACA899"></div>
<svg class="a" style="left:584px;top:637px" width="18" height="17" viewBox="0 0 18 17"><rect x="2.5" y="1.5" width="15" height="12" fill="#EEF2FC" stroke="#4A6AB8"/><rect x="2.5" y="1.5" width="15" height="3" fill="#8EAEEA"/><path d="M7 7 H14 M7 9.5 H12" stroke="#2F58C8"/><rect x="1" y="5" width="3" height="8" fill="#E02A10"/><rect x="1" y="14" width="3" height="3" fill="#E02A10"/></svg>
<div class="t" style="left:602px;top:639px;font-size:11px;color:#6A6A6A">Immedi...</div>
<svg class="a" style="left:656px;top:637px" width="16" height="17" viewBox="0 0 16 17"><rect x="0.5" y="1.5" width="14" height="14" fill="#EEF2FC" stroke="#1F3A9A"/><path d="M3 5 H12 M3 7.5 H12 M3 10 H12 M3 12.5 H10" stroke="#2F58C8" stroke-width="1.2"/></svg>
<div class="t" style="left:672px;top:639px;font-size:11px;color:#000">Output</div>
<svg class="a" style="left:713px;top:636px" width="17" height="18" viewBox="0 0 17 18"><rect x="0.5" y="0.5" width="13" height="10" fill="#EEF2FC" stroke="#4A6AB8"/><rect x="0.5" y="0.5" width="13" height="2.5" fill="#6A90E0"/><rect x="3.5" y="5.5" width="8" height="11" fill="#E0E4EC" stroke="#5A6A8A"/><path d="M13 5 Q16 7 14 11" stroke="#2F6FE0" stroke-width="1.5" fill="none"/><rect x="11.5" y="11.5" width="5" height="6" fill="#fff" stroke="#5A6A8A"/></svg>
<div class="t" style="left:730px;top:639px;font-size:11px;color:#6A6A6A">Pendin...</div>
<div class="a" style="left:779px;top:635px;width:1px;height:17px;background:#ACA899"></div>
<svg class="a" style="left:783px;top:636px" width="19" height="19" viewBox="0 0 19 19"><rect x="1.5" y="3.5" width="12" height="13" fill="#F0F0F0" stroke="#8A8A8A"/><rect x="4" y="1" width="7" height="4" fill="#E6B84A" stroke="#8A6510" stroke-width="0.6"/><circle cx="13" cy="13" r="5" fill="#E84A2A" stroke="#B02A10" stroke-width="0.8"/><path d="M10.8 10.8 L15.2 15.2 M15.2 10.8 L10.8 15.2" stroke="#fff" stroke-width="1.4"/></svg>
<div class="t" style="left:800px;top:639px;font-size:11px;color:#6A6A6A">Error List</div>
<div class="a" style="left:4px;top:657px;width:847px;height:23px;background:linear-gradient(to bottom,#E9E6DA,#EDEAE0)"></div>
<div class="a" style="left:4px;top:657px;width:847px;height:1px;background:#BFBBA8"></div>
<div class="t" style="left:12px;top:664px;">Ready</div>
<svg class="a" style="left:838px;top:667px" width="12" height="12" viewBox="0 0 12 12"><rect x="10" y="2" width="2" height="2" fill="#fff"/><rect x="9" y="1" width="2" height="2" fill="#BDB9A5"/><rect x="10" y="6" width="2" height="2" fill="#fff"/><rect x="9" y="5" width="2" height="2" fill="#BDB9A5"/><rect x="6" y="6" width="2" height="2" fill="#fff"/><rect x="5" y="5" width="2" height="2" fill="#BDB9A5"/><rect x="10" y="10" width="2" height="2" fill="#fff"/><rect x="9" y="9" width="2" height="2" fill="#BDB9A5"/><rect x="6" y="10" width="2" height="2" fill="#fff"/><rect x="5" y="9" width="2" height="2" fill="#BDB9A5"/><rect x="2" y="10" width="2" height="2" fill="#fff"/><rect x="1" y="9" width="2" height="2" fill="#BDB9A5"/></svg>
</body></html>
